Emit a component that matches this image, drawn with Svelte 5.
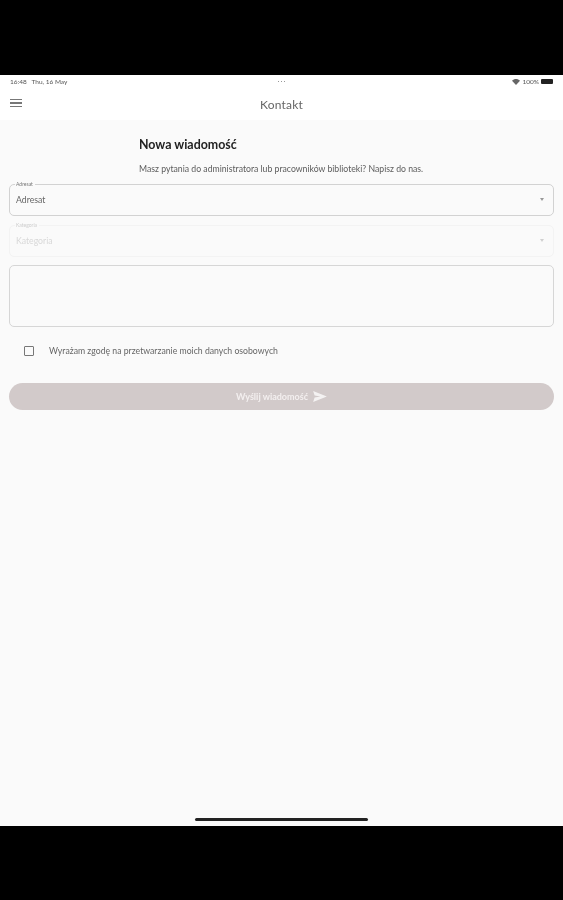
<script>
  const fields = [
    { label: 'Adresat', value: 'Adresat', disabled: false },
    { label: 'Kategoria', value: 'Kategoria', disabled: true }
  ];
</script>

<div class="screen">
  <div class="letterbox top"></div>
  <main class="app">
    <header class="header">
      <div class="status">
        <span class="time">16:48&nbsp;&nbsp; Thu, 16 May</span>
        <span class="dots"><i></i><i></i><i></i></span>
        <span class="right">
          <svg width="8" height="6" viewBox="0 0 12 9" aria-hidden="true"><path d="M6 9 0 2.6C3.4-.8 8.6-.8 12 2.6z" fill="#666"/></svg>
          <span class="pct">100%</span>
          <span class="battery"></span>
        </span>
      </div>
      <div class="bar">
        <button class="menu" aria-label="Menu"><span></span><span></span><span></span></button>
        <h1>Kontakt</h1>
      </div>
    </header>

    <section class="content">
      <div class="intro">
        <h2>Nowa wiadomość</h2>
        <p>Masz pytania do administratora lub pracowników biblioteki? Napisz do nas.</p>
      </div>

      <div class="fields">
        {#each fields as f}
          <div class="field" class:disabled={f.disabled}>
            <span class="legend">{f.label}</span>
            <span class="value">{f.value}</span>
            <span class="caret"></span>
          </div>
        {/each}
        <div class="textarea"></div>
      </div>

      <label class="consent">
        <span class="box"></span>
        <span>Wyrażam zgodę na przetwarzanie moich danych osobowych</span>
      </label>

      <button class="send">
        <span>Wyślij wiadomość</span>
        <svg width="14" height="11" viewBox="0 0 15 12" aria-hidden="true"><path d="M0 0 15 6 0 12l1.6-4.800L8 6 1.600 4.800z" fill="#fff" opacity=".75"/></svg>
      </button>
    </section>

    <div class="home"><span></span></div>
  </main>
  <div class="letterbox bottom"></div>
</div>

<style>
  :global(body) {
    margin: 0;
    background: #000;
  }
  .screen {
    width: 563px;
    height: 900px;
    display: flex;
    flex-direction: column;
    font-family: Lato, "Open Sans", sans-serif;
    overflow: hidden;
    background: #000;
  }
  .letterbox {
    background: #000;
    flex: none;
  }
  .top { height: 75px; }
  .bottom { height: 74px; }
  .app {
    height: 751px;
    background: #fafafa;
    display: flex;
    flex-direction: column;
    flex: none;
    filter: blur(0.45px);
  }
  .header {
    background: #fff;
    height: 45px;
    flex: none;
  }
  .status {
    height: 13px;
    display: grid;
    grid-template-columns: 1fr auto 1fr;
    align-items: center;
    padding: 0 10px;
    font-size: 6.5px;
    color: #555;
  }
  .dots {
    display: flex;
    gap: 1.5px;
  }
  .dots i {
    width: 1.5px;
    height: 1.5px;
    border-radius: 50%;
    background: #777;
  }
  .right {
    display: flex;
    align-items: center;
    justify-content: flex-end;
    gap: 2px;
  }
  .battery {
    width: 12px;
    height: 5px;
    background: #222;
    border-radius: 1px;
  }
  .bar {
    height: 32px;
    position: relative;
    display: flex;
    align-items: center;
    justify-content: center;
  }
  .menu {
    position: absolute;
    left: 10px;
    top: 11px;
    width: 12px;
    padding: 0;
    border: 0;
    background: none;
    display: flex;
    flex-direction: column;
    gap: 2px;
  }
  .menu span {
    height: 1.300px;
    background: #777;
  }
  h1 {
    margin: 0;
    font-size: 12px;
    font-weight: 400;
    color: #666;
    letter-spacing: 0.2px;
  }
  .content {
    flex: 1;
    padding: 0 9px;
  }
  .intro {
    margin-left: 130px;
    padding-top: 18px;
  }
  h2 {
    margin: 0;
    font-size: 12.400px;
    line-height: 14px;
    font-weight: 700;
    color: #222;
  }
  .intro p {
    margin: 11px 0 0;
    font-size: 8.700px;
    line-height: 12px;
    color: #5c5c5c;
    white-space: nowrap;
  }
  .fields {
    margin-top: 9px;
    display: flex;
    flex-direction: column;
  }
  .field {
    position: relative;
    height: 32px;
    box-sizing: border-box;
    border: 1px solid #d2d2d2;
    border-radius: 5px;
    display: flex;
    align-items: center;
    padding: 0 9px 2px 6px;
    font-size: 8.700px;
    color: #666;
    margin-bottom: 9px;
  }
  .field.disabled {
    border-color: #f3f3f3;
    color: #d8d8d8;
    margin-bottom: 8px;
  }
  .legend {
    position: absolute;
    left: 5px;
    top: -3px;
    padding: 0 2px 0 1px;
    background: #fafafa;
    font-size: 5px;
    line-height: 5px;
    color: #777;
  }
  .field.disabled .legend {
    color: #cdcdcd;
  }
  .value {
    flex: 1;
  }
  .caret {
    width: 0;
    height: 0;
    border-left: 2px solid transparent;
    border-right: 2px solid transparent;
    border-top: 3px solid #999;
  }
  .field.disabled .caret {
    border-top-color: #d0d0d0;
  }
  .textarea {
    height: 62px;
    box-sizing: border-box;
    border: 1px solid #d6d6d6;
    border-radius: 5px;
  }
  .consent {
    display: flex;
    align-items: center;
    gap: 15px;
    margin: 18px 0 0 15px;
    font-size: 8.700px;
    line-height: 12px;
    color: #666;
  }
  .box {
    width: 10px;
    height: 10px;
    box-sizing: border-box;
    border: 1px solid #777;
    border-radius: 1px;
    flex: none;
  }
  .send {
    margin-top: 26px;
    width: 100%;
    height: 27px;
    border: 0;
    border-radius: 14px;
    background: #d2caca;
    color: #f3efef;
    font: 700 9px Lato, sans-serif;
    display: flex;
    align-items: center;
    justify-content: center;
    gap: 5px;
  }
  .home {
    height: 8px;
    flex: none;
    display: flex;
    justify-content: center;
  }
  .home span {
    width: 173px;
    height: 3px;
    background: #222;
    border-radius: 2px;
  }
</style>
